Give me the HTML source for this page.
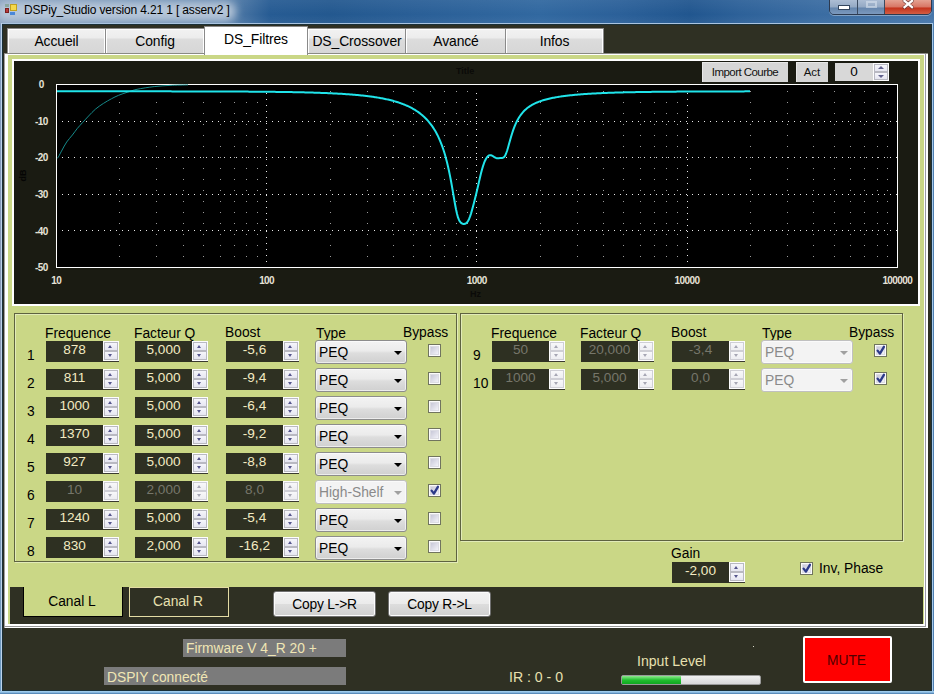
<!DOCTYPE html><html><head><meta charset="utf-8"><style>
*{box-sizing:border-box;margin:0;padding:0}
html,body{width:934px;height:694px;overflow:hidden}
body{position:relative;background:#2f6098;font-family:"Liberation Sans", sans-serif;font-size:13px;color:#000}
.a{position:absolute}
.t{position:absolute;white-space:nowrap;line-height:1}
.tab{position:absolute;top:28px;height:26px;background:linear-gradient(#f2f2f2 0,#ececec 9px,#dcdcdc 10px,#d6d6d6 100%);border:1px solid #8a8a8a;border-bottom:none;box-shadow:inset 1px 1px 0 #fff,inset -1px 0 0 #fff;text-align:center}
.num{position:absolute;width:74px;height:21px}
.num .box{position:absolute;left:0;top:0;width:57px;height:21px;background:#2e3022;color:#f3ebc3;text-align:center;font-size:13.6px;line-height:18px}
.num .spin{position:absolute;left:57px;top:0;width:16px;height:21px;background:#fdfdfd;border-bottom:1px solid #3a3a30}
.spin i{position:absolute;left:1px;width:14px;height:9px;background:linear-gradient(#f6f6fb,#e6e6f1);border:1px solid #b9b9c2}
.spin i:nth-child(1){top:1px}
.spin i:nth-child(2){top:10px}
.spin b{position:absolute;left:5px;width:0;height:0;border-left:2.5px solid transparent;border-right:2.5px solid transparent}
.spin b.u{top:4px;border-bottom:3px solid #56568c}
.spin b.d{top:13px;border-top:3px solid #56568c}
.dis .box{color:#76766a}
.dis .spin b.u{border-bottom-color:#a6a6b4}
.dis .spin b.d{border-top-color:#a6a6b4}
.dis .spin i{background:linear-gradient(#f8f8fa,#eeeef2);border-color:#cfcfd6}
.combo{position:absolute;width:92px;height:24px;border:1px solid #8c8c8c;border-radius:3px;background:linear-gradient(#f3f3f3 0,#ebebeb 45%,#dddddd 55%,#d0d0d0 100%);box-shadow:inset 0 0 0 1px rgba(255,255,255,0.6);font-size:13.8px;line-height:24px;padding-left:3px;color:#000}
.combo b{position:absolute;right:4px;top:10px;width:0;height:0;border-left:4px solid transparent;border-right:4px solid transparent;border-top:4px solid #000}
.combo.dis{background:#f3f3f3;border-color:#c0c0c0;color:#8a8a8a}
.combo.dis b{border-top-color:#a0a0a0}
.chk{position:absolute;width:13px;height:13px;border:1px solid #70745e;background:#fbfbfb}
.chk::after{content:"";position:absolute;left:2px;top:2px;width:7px;height:7px;background:linear-gradient(135deg,#c8c8d8,#f2f2f8);box-shadow:0 0 0 1px #dcdce4}
.chk svg{position:absolute;left:-1px;top:-1px;z-index:2}
.lbl{position:absolute;white-space:nowrap;font-size:13.8px;line-height:13px;color:#000}
.grp{position:absolute;border:1px solid #5e6240;box-shadow:1px 1px 0 #e2ebb8, inset 1px 1px 0 #e2ebb8}
</style></head><body>
<div class="a" style="left:0;top:0;width:934px;height:694px;background:linear-gradient(90deg,#7f9aba 0,#7593b6 30px,#4f79a6 235px,#265b93 270px,#23588f 330px,#2a5f97 420px,#3168a0 540px,#2b6099 620px,#21568f 690px,#2d6199 740px,#3a6ca2 820px,#4676aa 934px)"></div>
<div class="a" style="left:0;top:0;width:934px;height:24px;background:linear-gradient(rgba(255,255,255,0.06),rgba(255,255,255,0.0) 60%,rgba(255,255,255,0.05))"></div>
<div class="a" style="left:-4px;top:1px;width:240px;height:21px;border-radius:10px;background:rgba(186,201,218,0.95);filter:blur(4px)"></div>
<div class="a" style="left:2px;top:23px;width:930px;height:1px;background:#aac4e0"></div>
<div class="a" style="left:5px;top:4px;width:4px;height:3px;background:#8aa7a0"></div>
<div class="a" style="left:5px;top:8px;width:4px;height:5px;background:#b83a3a;border:1px solid #7a2020"></div>
<div class="a" style="left:10px;top:4px;width:7px;height:7px;background:#f4d84a;border:1px solid #c0a020"></div>
<div class="a" style="left:10px;top:12px;width:5px;height:3px;background:#4a88d8"></div>
<div class="t" style="left:24px;top:4px;font-size:12px;letter-spacing:-0.15px;color:#000">DSPiy_Studio version 4.21 1 [ asserv2 ]</div>
<div class="a" style="left:829px;top:-2px;width:103px;height:17px;border:1px solid #2c3a50;border-radius:0 0 5px 5px;overflow:hidden;box-shadow:0 1px 0 rgba(255,255,255,0.35)"><div class="a" style="left:0;top:0;width:27px;height:16px;background:linear-gradient(#b0c0d6,#94a9c4 50%,#6686ad 56%,#7f9cc0)"></div><div class="a" style="left:27px;top:0;width:1px;height:16px;background:#3a4a60"></div><div class="a" style="left:28px;top:0;width:26px;height:16px;background:linear-gradient(#b0c0d6,#94a9c4 50%,#6686ad 56%,#7f9cc0)"></div><div class="a" style="left:54px;top:0;width:1px;height:16px;background:#3a4a60"></div><div class="a" style="left:55px;top:0;width:48px;height:16px;background:linear-gradient(#e6a898,#d87664 50%,#c4331c 56%,#d4644a)"></div></div>
<div class="a" style="left:838px;top:5px;width:12px;height:5px;background:#fff;border:1px solid #34465e"></div>
<div class="a" style="left:866px;top:1px;width:11px;height:7px;border:2px solid rgba(220,230,240,0.55)"></div>
<svg class="a" style="left:901px;top:-1px" width="15" height="11"><path d="M3.5 1.8 L11 8.2 M11 1.8 L3.5 8.2" stroke="#5a3030" stroke-opacity="0.7" stroke-width="3.8" stroke-linecap="round"/><path d="M3.5 1.8 L11 8.2 M11 1.8 L3.5 8.2" stroke="#fff" stroke-width="2.2" stroke-linecap="square"/></svg>
<div class="a" style="left:0;top:24px;width:1px;height:670px;background:linear-gradient(#7f9cc0,#8a98b4 50%,#6a98c0)"></div>
<div class="a" style="left:1px;top:23px;width:1px;height:670px;background:#bcd2ea"></div>
<div class="a" style="left:932px;top:23px;width:1px;height:670px;background:#a6c8ea"></div>
<div class="a" style="left:933px;top:23px;width:1px;height:671px;background:#4f80b2"></div>
<div class="a" style="left:0;top:691px;width:934px;height:1px;background:#9ecbec"></div>
<div class="a" style="left:0;top:692px;width:934px;height:1px;background:#86b6de"></div>
<div class="a" style="left:0;top:693px;width:934px;height:1px;background:#5a8cba"></div>
<div class="a" style="left:2px;top:24px;width:930px;height:667px;background:#2f3023;border:1px solid #1a3038"></div>
<div class="tab" style="left:7px;width:99px"></div>
<div class="t" style="left:7px;width:99px;top:35px;text-align:center;font-size:13.9px;letter-spacing:-0.1px">Accueil</div>
<div class="tab" style="left:105px;width:100px"></div>
<div class="t" style="left:105px;width:100px;top:35px;text-align:center;font-size:13.9px;letter-spacing:-0.1px">Config</div>
<div class="tab" style="left:307px;width:100px"></div>
<div class="t" style="left:307px;width:100px;top:35px;text-align:center;font-size:13.9px;letter-spacing:-0.1px">DS_Crossover</div>
<div class="tab" style="left:405px;width:102px"></div>
<div class="t" style="left:405px;width:102px;top:35px;text-align:center;font-size:13.9px;letter-spacing:-0.1px">Avancé</div>
<div class="tab" style="left:505px;width:99px"></div>
<div class="t" style="left:505px;width:99px;top:35px;text-align:center;font-size:13.9px;letter-spacing:-0.1px">Infos</div>
<div class="a" style="left:4px;top:54px;width:924px;height:574px;background:#fff;border-left:1px solid #a0a0a0"></div>
<div class="a" style="left:925px;top:54px;width:1px;height:573px;background:#9a9aa6"></div>
<div class="a" style="left:4px;top:53px;width:924px;height:1px;background:#8a8a84"></div>
<div class="a" style="left:4px;top:626px;width:922px;height:1px;background:#979797"></div>
<div class="a" style="left:204px;top:26px;width:104px;height:29px;background:#fff;border:1px solid #8a8a8a;border-bottom:none"></div>
<div class="t" style="left:205px;width:102px;top:33px;text-align:center;font-size:13.9px;letter-spacing:-0.1px">DS_Filtres</div>
<div class="a" style="left:8px;top:55px;width:916px;height:569px;background:#cad786"></div>
<div class="a" style="left:12px;top:59px;width:908px;height:247px;background:#1a1b12;border:2px solid #fff"></div>
<svg class="a" style="left:0;top:0" width="934" height="694" shape-rendering="crispEdges"><rect x="56" y="84" width="841" height="183" fill="#000"/><line x1="119.5" y1="91" x2="119.5" y2="267" stroke="#9a9a9a" stroke-width="1" stroke-dasharray="1 10"/><line x1="156.5" y1="91" x2="156.5" y2="267" stroke="#9a9a9a" stroke-width="1" stroke-dasharray="1 10"/><line x1="183.5" y1="91" x2="183.5" y2="267" stroke="#9a9a9a" stroke-width="1" stroke-dasharray="1 10"/><line x1="203.5" y1="91" x2="203.5" y2="267" stroke="#9a9a9a" stroke-width="1" stroke-dasharray="1 10"/><line x1="220.5" y1="91" x2="220.5" y2="267" stroke="#9a9a9a" stroke-width="1" stroke-dasharray="1 10"/><line x1="234.5" y1="91" x2="234.5" y2="267" stroke="#9a9a9a" stroke-width="1" stroke-dasharray="1 10"/><line x1="246.5" y1="91" x2="246.5" y2="267" stroke="#9a9a9a" stroke-width="1" stroke-dasharray="1 10"/><line x1="257.5" y1="91" x2="257.5" y2="267" stroke="#9a9a9a" stroke-width="1" stroke-dasharray="1 10"/><line x1="330.5" y1="91" x2="330.5" y2="267" stroke="#9a9a9a" stroke-width="1" stroke-dasharray="1 10"/><line x1="367.5" y1="91" x2="367.5" y2="267" stroke="#9a9a9a" stroke-width="1" stroke-dasharray="1 10"/><line x1="393.5" y1="91" x2="393.5" y2="267" stroke="#9a9a9a" stroke-width="1" stroke-dasharray="1 10"/><line x1="413.5" y1="91" x2="413.5" y2="267" stroke="#9a9a9a" stroke-width="1" stroke-dasharray="1 10"/><line x1="430.5" y1="91" x2="430.5" y2="267" stroke="#9a9a9a" stroke-width="1" stroke-dasharray="1 10"/><line x1="444.5" y1="91" x2="444.5" y2="267" stroke="#9a9a9a" stroke-width="1" stroke-dasharray="1 10"/><line x1="456.5" y1="91" x2="456.5" y2="267" stroke="#9a9a9a" stroke-width="1" stroke-dasharray="1 10"/><line x1="467.5" y1="91" x2="467.5" y2="267" stroke="#9a9a9a" stroke-width="1" stroke-dasharray="1 10"/><line x1="540.5" y1="91" x2="540.5" y2="267" stroke="#9a9a9a" stroke-width="1" stroke-dasharray="1 10"/><line x1="577.5" y1="91" x2="577.5" y2="267" stroke="#9a9a9a" stroke-width="1" stroke-dasharray="1 10"/><line x1="603.5" y1="91" x2="603.5" y2="267" stroke="#9a9a9a" stroke-width="1" stroke-dasharray="1 10"/><line x1="623.5" y1="91" x2="623.5" y2="267" stroke="#9a9a9a" stroke-width="1" stroke-dasharray="1 10"/><line x1="640.5" y1="91" x2="640.5" y2="267" stroke="#9a9a9a" stroke-width="1" stroke-dasharray="1 10"/><line x1="654.5" y1="91" x2="654.5" y2="267" stroke="#9a9a9a" stroke-width="1" stroke-dasharray="1 10"/><line x1="666.5" y1="91" x2="666.5" y2="267" stroke="#9a9a9a" stroke-width="1" stroke-dasharray="1 10"/><line x1="677.5" y1="91" x2="677.5" y2="267" stroke="#9a9a9a" stroke-width="1" stroke-dasharray="1 10"/><line x1="750.5" y1="91" x2="750.5" y2="267" stroke="#9a9a9a" stroke-width="1" stroke-dasharray="1 10"/><line x1="787.5" y1="91" x2="787.5" y2="267" stroke="#9a9a9a" stroke-width="1" stroke-dasharray="1 10"/><line x1="813.5" y1="91" x2="813.5" y2="267" stroke="#9a9a9a" stroke-width="1" stroke-dasharray="1 10"/><line x1="834.5" y1="91" x2="834.5" y2="267" stroke="#9a9a9a" stroke-width="1" stroke-dasharray="1 10"/><line x1="850.5" y1="91" x2="850.5" y2="267" stroke="#9a9a9a" stroke-width="1" stroke-dasharray="1 10"/><line x1="864.5" y1="91" x2="864.5" y2="267" stroke="#9a9a9a" stroke-width="1" stroke-dasharray="1 10"/><line x1="877.5" y1="91" x2="877.5" y2="267" stroke="#9a9a9a" stroke-width="1" stroke-dasharray="1 10"/><line x1="887.5" y1="91" x2="887.5" y2="267" stroke="#9a9a9a" stroke-width="1" stroke-dasharray="1 10"/><line x1="266.5" y1="93" x2="266.5" y2="267" stroke="#e8e8e8" stroke-width="1" stroke-dasharray="1 5"/><line x1="476.5" y1="93" x2="476.5" y2="267" stroke="#e8e8e8" stroke-width="1" stroke-dasharray="1 5"/><line x1="687.5" y1="93" x2="687.5" y2="267" stroke="#e8e8e8" stroke-width="1" stroke-dasharray="1 5"/><line x1="62" y1="121.5" x2="897" y2="121.5" stroke="#e8e8e8" stroke-width="1" stroke-dasharray="1 5"/><line x1="62" y1="157.5" x2="897" y2="157.5" stroke="#e8e8e8" stroke-width="1" stroke-dasharray="1 5"/><line x1="62" y1="194.5" x2="897" y2="194.5" stroke="#e8e8e8" stroke-width="1" stroke-dasharray="1 5"/><line x1="62" y1="230.5" x2="897" y2="230.5" stroke="#e8e8e8" stroke-width="1" stroke-dasharray="1 5"/><rect x="56.5" y="84.5" width="841" height="183" fill="none" stroke="#fff" stroke-width="1"/><path shape-rendering="auto" fill="none" stroke="#168a8a" stroke-width="1" d="M57.00,158.50 C57.23,158.23 57.55,158.32 58.40,156.90 C59.25,155.48 60.72,152.48 62.10,150.00 C63.48,147.52 64.98,144.50 66.70,142.00 C68.42,139.50 70.67,137.22 72.40,135.00 C74.13,132.78 75.37,130.82 77.10,128.70 C78.83,126.58 80.88,124.42 82.80,122.30 C84.72,120.18 86.48,118.20 88.60,116.00 C90.72,113.80 93.00,111.22 95.50,109.10 C98.00,106.98 100.92,105.03 103.60,103.30 C106.28,101.57 109.10,100.03 111.60,98.70 C114.10,97.37 115.90,96.40 118.60,95.30 C121.30,94.20 124.73,93.10 127.80,92.10 C130.87,91.10 132.60,90.22 137.00,89.30 C141.40,88.38 148.70,87.25 154.20,86.60 C159.70,85.95 164.37,85.68 170.00,85.40 C175.63,85.12 185.00,84.98 188.00,84.90"/><polyline shape-rendering="auto" fill="none" stroke="#20e4ea" stroke-width="2" stroke-linejoin="round" points="57.0,91.32 58.0,91.32 59.0,91.32 60.0,91.32 61.0,91.32 62.0,91.33 63.0,91.33 64.0,91.33 65.0,91.33 66.0,91.33 67.0,91.33 68.0,91.33 69.0,91.33 70.0,91.33 71.0,91.33 72.0,91.33 73.0,91.33 74.0,91.33 75.0,91.33 76.0,91.33 77.0,91.33 78.0,91.33 79.0,91.33 80.0,91.33 81.0,91.33 82.0,91.33 83.0,91.33 84.0,91.33 85.0,91.33 86.0,91.33 87.0,91.33 88.0,91.33 89.0,91.33 90.0,91.33 91.0,91.33 92.0,91.33 93.0,91.33 94.0,91.33 95.0,91.33 96.0,91.33 97.0,91.33 98.0,91.33 99.0,91.33 100.0,91.33 101.0,91.33 102.0,91.33 103.0,91.33 104.0,91.33 105.0,91.33 106.0,91.33 107.0,91.33 108.0,91.33 109.0,91.33 110.0,91.33 111.0,91.33 112.0,91.34 113.0,91.34 114.0,91.34 115.0,91.34 116.0,91.34 117.0,91.34 118.0,91.34 119.0,91.34 120.0,91.34 121.0,91.34 122.0,91.34 123.0,91.34 124.0,91.34 125.0,91.34 126.0,91.34 127.0,91.34 128.0,91.34 129.0,91.34 130.0,91.34 131.0,91.34 132.0,91.34 133.0,91.34 134.0,91.34 135.0,91.34 136.0,91.35 137.0,91.35 138.0,91.35 139.0,91.35 140.0,91.35 141.0,91.35 142.0,91.35 143.0,91.35 144.0,91.35 145.0,91.35 146.0,91.35 147.0,91.35 148.0,91.35 149.0,91.35 150.0,91.35 151.0,91.36 152.0,91.36 153.0,91.36 154.0,91.36 155.0,91.36 156.0,91.36 157.0,91.36 158.0,91.36 159.0,91.36 160.0,91.36 161.0,91.36 162.0,91.37 163.0,91.37 164.0,91.37 165.0,91.37 166.0,91.37 167.0,91.37 168.0,91.37 169.0,91.37 170.0,91.37 171.0,91.37 172.0,91.38 173.0,91.38 174.0,91.38 175.0,91.38 176.0,91.38 177.0,91.38 178.0,91.38 179.0,91.39 180.0,91.39 181.0,91.39 182.0,91.39 183.0,91.39 184.0,91.39 185.0,91.39 186.0,91.40 187.0,91.40 188.0,91.40 189.0,91.40 190.0,91.40 191.0,91.41 192.0,91.41 193.0,91.41 194.0,91.41 195.0,91.41 196.0,91.42 197.0,91.42 198.0,91.42 199.0,91.42 200.0,91.42 201.0,91.43 202.0,91.43 203.0,91.43 204.0,91.43 205.0,91.44 206.0,91.44 207.0,91.44 208.0,91.44 209.0,91.45 210.0,91.45 211.0,91.45 212.0,91.46 213.0,91.46 214.0,91.46 215.0,91.46 216.0,91.47 217.0,91.47 218.0,91.47 219.0,91.48 220.0,91.48 221.0,91.49 222.0,91.49 223.0,91.49 224.0,91.50 225.0,91.50 226.0,91.50 227.0,91.51 228.0,91.51 229.0,91.52 230.0,91.52 231.0,91.53 232.0,91.53 233.0,91.54 234.0,91.54 235.0,91.54 236.0,91.55 237.0,91.56 238.0,91.56 239.0,91.57 240.0,91.57 241.0,91.58 242.0,91.58 243.0,91.59 244.0,91.59 245.0,91.60 246.0,91.61 247.0,91.61 248.0,91.62 249.0,91.63 250.0,91.63 251.0,91.64 252.0,91.65 253.0,91.66 254.0,91.66 255.0,91.67 256.0,91.68 257.0,91.69 258.0,91.69 259.0,91.70 260.0,91.71 261.0,91.72 262.0,91.73 263.0,91.74 264.0,91.75 265.0,91.76 266.0,91.77 267.0,91.78 268.0,91.79 269.0,91.80 270.0,91.81 271.0,91.82 272.0,91.83 273.0,91.84 274.0,91.86 275.0,91.87 276.0,91.88 277.0,91.89 278.0,91.91 279.0,91.92 280.0,91.93 281.0,91.95 282.0,91.96 283.0,91.97 284.0,91.99 285.0,92.00 286.0,92.02 287.0,92.04 288.0,92.05 289.0,92.07 290.0,92.09 291.0,92.10 292.0,92.12 293.0,92.14 294.0,92.16 295.0,92.18 296.0,92.20 297.0,92.22 298.0,92.24 299.0,92.26 300.0,92.28 301.0,92.30 302.0,92.33 303.0,92.35 304.0,92.37 305.0,92.40 306.0,92.42 307.0,92.45 308.0,92.47 309.0,92.50 310.0,92.53 311.0,92.56 312.0,92.58 313.0,92.61 314.0,92.64 315.0,92.67 316.0,92.71 317.0,92.74 318.0,92.77 319.0,92.81 320.0,92.84 321.0,92.88 322.0,92.91 323.0,92.95 324.0,92.99 325.0,93.03 326.0,93.07 327.0,93.11 328.0,93.15 329.0,93.20 330.0,93.24 331.0,93.29 332.0,93.33 333.0,93.38 334.0,93.43 335.0,93.48 336.0,93.53 337.0,93.59 338.0,93.64 339.0,93.70 340.0,93.75 341.0,93.81 342.0,93.87 343.0,93.94 344.0,94.00 345.0,94.07 346.0,94.13 347.0,94.20 348.0,94.27 349.0,94.34 350.0,94.42 351.0,94.50 352.0,94.57 353.0,94.66 354.0,94.74 355.0,94.82 356.0,94.91 357.0,95.00 358.0,95.09 359.0,95.19 360.0,95.29 361.0,95.39 362.0,95.49 363.0,95.60 364.0,95.71 365.0,95.82 366.0,95.94 367.0,96.06 368.0,96.18 369.0,96.30 370.0,96.43 371.0,96.57 372.0,96.71 373.0,96.85 374.0,96.99 375.0,97.15 376.0,97.30 377.0,97.46 378.0,97.63 379.0,97.80 380.0,97.97 381.0,98.15 382.0,98.34 383.0,98.53 384.0,98.73 385.0,98.93 386.0,99.15 387.0,99.36 388.0,99.59 389.0,99.82 390.0,100.06 391.0,100.31 392.0,100.57 393.0,100.84 394.0,101.11 395.0,101.40 396.0,101.69 397.0,102.00 398.0,102.31 399.0,102.64 400.0,102.98 401.0,103.33 402.0,103.70 403.0,104.08 404.0,104.47 405.0,104.88 406.0,105.30 407.0,105.74 408.0,106.19 409.0,106.67 410.0,107.16 411.0,107.68 412.0,108.21 413.0,108.77 414.0,109.35 415.0,109.95 416.0,110.58 417.0,111.24 418.0,111.93 419.0,112.65 420.0,113.40 421.0,114.18 422.0,115.01 423.0,115.87 424.0,116.77 425.0,117.72 426.0,118.72 427.0,119.77 428.0,120.88 429.0,122.04 430.0,123.27 431.0,124.57 432.0,125.94 433.0,127.40 434.0,128.94 435.0,130.58 436.0,132.33 437.0,134.19 438.0,136.17 439.0,138.30 440.0,140.57 441.0,143.02 442.0,145.64 443.0,148.47 444.0,151.53 445.0,154.83 446.0,158.40 447.0,162.26 448.0,166.45 449.0,170.97 450.0,175.84 451.0,181.06 452.0,186.60 453.0,192.37 454.0,198.24 455.0,203.99 456.0,209.30 457.0,213.84 458.0,217.42 459.0,219.98 460.0,221.71 461.0,222.84 462.0,223.54 463.0,223.94 464.0,224.04 465.0,223.84 466.0,223.31 467.0,222.41 468.0,221.06 469.0,219.17 470.0,216.66 471.0,213.60 472.0,210.13 473.0,206.43 474.0,202.63 475.0,198.75 476.0,194.74 477.0,190.56 478.0,186.21 479.0,181.80 480.0,177.46 481.0,173.33 482.0,169.54 483.0,166.15 484.0,163.20 485.0,160.72 486.0,158.71 487.0,157.17 488.0,156.07 489.0,155.41 490.0,155.15 491.0,155.24 492.0,155.63 493.0,156.22 494.0,156.88 495.0,157.49 496.0,157.93 497.0,158.16 498.0,158.20 499.0,158.14 500.0,158.05 501.0,158.00 502.0,157.93 503.0,157.71 504.0,157.09 505.0,155.83 506.0,153.78 507.0,150.99 508.0,147.68 509.0,144.09 510.0,140.48 511.0,136.98 512.0,133.70 513.0,130.67 514.0,127.91 515.0,125.39 516.0,123.11 517.0,121.05 518.0,119.19 519.0,117.50 520.0,115.96 521.0,114.56 522.0,113.29 523.0,112.12 524.0,111.05 525.0,110.07 526.0,109.16 527.0,108.32 528.0,107.54 529.0,106.82 530.0,106.15 531.0,105.52 532.0,104.93 533.0,104.38 534.0,103.86 535.0,103.38 536.0,102.92 537.0,102.49 538.0,102.08 539.0,101.69 540.0,101.32 541.0,100.97 542.0,100.64 543.0,100.33 544.0,100.03 545.0,99.74 546.0,99.46 547.0,99.20 548.0,98.95 549.0,98.71 550.0,98.48 551.0,98.26 552.0,98.05 553.0,97.85 554.0,97.65 555.0,97.47 556.0,97.29 557.0,97.11 558.0,96.95 559.0,96.78 560.0,96.63 561.0,96.48 562.0,96.34 563.0,96.20 564.0,96.06 565.0,95.93 566.0,95.80 567.0,95.68 568.0,95.56 569.0,95.45 570.0,95.34 571.0,95.23 572.0,95.13 573.0,95.03 574.0,94.93 575.0,94.84 576.0,94.75 577.0,94.66 578.0,94.57 579.0,94.49 580.0,94.41 581.0,94.33 582.0,94.25 583.0,94.18 584.0,94.11 585.0,94.04 586.0,93.97 587.0,93.90 588.0,93.84 589.0,93.78 590.0,93.72 591.0,93.66 592.0,93.60 593.0,93.54 594.0,93.49 595.0,93.44 596.0,93.38 597.0,93.33 598.0,93.29 599.0,93.24 600.0,93.19 601.0,93.15 602.0,93.10 603.0,93.06 604.0,93.02 605.0,92.98 606.0,92.94 607.0,92.90 608.0,92.86 609.0,92.83 610.0,92.79 611.0,92.75 612.0,92.72 613.0,92.69 614.0,92.66 615.0,92.62 616.0,92.59 617.0,92.56 618.0,92.53 619.0,92.51 620.0,92.48 621.0,92.45 622.0,92.42 623.0,92.40 624.0,92.37 625.0,92.35 626.0,92.33 627.0,92.30 628.0,92.28 629.0,92.26 630.0,92.24 631.0,92.21 632.0,92.19 633.0,92.17 634.0,92.15 635.0,92.13 636.0,92.12 637.0,92.10 638.0,92.08 639.0,92.06 640.0,92.04 641.0,92.03 642.0,92.01 643.0,92.00 644.0,91.98 645.0,91.96 646.0,91.95 647.0,91.94 648.0,91.92 649.0,91.91 650.0,91.89 651.0,91.88 652.0,91.87 653.0,91.85 654.0,91.84 655.0,91.83 656.0,91.82 657.0,91.81 658.0,91.80 659.0,91.78 660.0,91.77 661.0,91.76 662.0,91.75 663.0,91.74 664.0,91.73 665.0,91.72 666.0,91.71 667.0,91.71 668.0,91.70 669.0,91.69 670.0,91.68 671.0,91.67 672.0,91.66 673.0,91.65 674.0,91.65 675.0,91.64 676.0,91.63 677.0,91.62 678.0,91.62 679.0,91.61 680.0,91.60 681.0,91.60 682.0,91.59 683.0,91.58 684.0,91.58 685.0,91.57 686.0,91.57 687.0,91.56 688.0,91.55 689.0,91.55 690.0,91.54 691.0,91.54 692.0,91.53 693.0,91.53 694.0,91.52 695.0,91.52 696.0,91.51 697.0,91.51 698.0,91.50 699.0,91.50 700.0,91.50 701.0,91.49 702.0,91.49 703.0,91.48 704.0,91.48 705.0,91.48 706.0,91.47 707.0,91.47 708.0,91.46 709.0,91.46 710.0,91.46 711.0,91.45 712.0,91.45 713.0,91.45 714.0,91.44 715.0,91.44 716.0,91.44 717.0,91.44 718.0,91.43 719.0,91.43 720.0,91.43 721.0,91.42 722.0,91.42 723.0,91.42 724.0,91.42 725.0,91.41 726.0,91.41 727.0,91.41 728.0,91.41 729.0,91.40 730.0,91.40 731.0,91.40 732.0,91.40 733.0,91.40 734.0,91.39 735.0,91.39 736.0,91.39 737.0,91.39 738.0,91.39 739.0,91.38 740.0,91.38 741.0,91.38 742.0,91.38 743.0,91.38 744.0,91.38 745.0,91.37 746.0,91.37 747.0,91.37 748.0,91.37 749.0,91.37 750.0,91.37"/></svg>
<div class="t" style="left:11.3px;width:60px;text-align:center;top:80.2px;font-size:10px;font-weight:bold;letter-spacing:-0.6px;color:#e6e2d8">0</div>
<div class="t" style="left:11.3px;width:60px;text-align:center;top:116.8px;font-size:10px;font-weight:bold;letter-spacing:-0.6px;color:#e6e2d8">-10</div>
<div class="t" style="left:11.3px;width:60px;text-align:center;top:153.4px;font-size:10px;font-weight:bold;letter-spacing:-0.6px;color:#e6e2d8">-20</div>
<div class="t" style="left:11.3px;width:60px;text-align:center;top:190.0px;font-size:10px;font-weight:bold;letter-spacing:-0.6px;color:#e6e2d8">-30</div>
<div class="t" style="left:11.3px;width:60px;text-align:center;top:226.6px;font-size:10px;font-weight:bold;letter-spacing:-0.6px;color:#e6e2d8">-40</div>
<div class="t" style="left:11.3px;width:60px;text-align:center;top:263.2px;font-size:10px;font-weight:bold;letter-spacing:-0.6px;color:#e6e2d8">-50</div>
<div class="t" style="left:26.3px;width:60px;text-align:center;top:276px;font-size:10px;font-weight:bold;letter-spacing:-0.6px;color:#e6e2d8">10</div>
<div class="t" style="left:236.6px;width:60px;text-align:center;top:276px;font-size:10px;font-weight:bold;letter-spacing:-0.6px;color:#e6e2d8">100</div>
<div class="t" style="left:446.8px;width:60px;text-align:center;top:276px;font-size:10px;font-weight:bold;letter-spacing:-0.6px;color:#e6e2d8">1000</div>
<div class="t" style="left:657.0px;width:60px;text-align:center;top:276px;font-size:10px;font-weight:bold;letter-spacing:-0.6px;color:#e6e2d8">10000</div>
<div class="t" style="left:867.3px;width:60px;text-align:center;top:276px;font-size:10px;font-weight:bold;letter-spacing:-0.6px;color:#e6e2d8">100000</div>
<div class="t" style="left:456px;top:67px;font-size:9px;font-weight:bold;color:#0a0a08">Title</div>
<div class="t" style="left:470px;top:290px;font-size:9px;font-weight:bold;color:#0a0a08">Hz</div>
<div class="t" style="left:17px;top:171px;font-size:9px;font-weight:bold;color:#050504;transform:rotate(-90deg)">dB</div>
<div class="a" style="left:702px;top:62px;width:86px;height:20px;background:#d6d6d6;border-top:1px solid #e8e8e8;border-left:1px solid #e8e8e8;"></div>
<div class="t" style="left:702px;width:86px;text-align:center;top:67px;font-size:11.5px;letter-spacing:-0.55px;color:#111">Import Courbe</div>
<div class="a" style="left:796px;top:62px;width:32px;height:20px;background:#d6d6d6;border-top:1px solid #e8e8e8;border-left:1px solid #e8e8e8;"></div>
<div class="t" style="left:796px;width:32px;text-align:center;top:67px;font-size:11.5px;color:#111">Act</div>
<div class="a" style="left:835px;top:63px;width:54px;height:18px;background:#d8d8d8"></div>
<div class="t" style="left:835px;width:38px;text-align:center;top:65px;font-size:13.5px;color:#000">0</div>
<div class="a" style="left:873px;top:63px;width:16px;height:18px;background:#fdfdfd"></div>
<div class="a" style="left:874px;top:64px;width:14px;height:8px;background:linear-gradient(#f6f6fb,#e6e6f1);border:1px solid #b9b9c2"></div>
<div class="a" style="left:874px;top:72px;width:14px;height:8px;background:linear-gradient(#f6f6fb,#e6e6f1);border:1px solid #b9b9c2"></div>
<div class="a" style="left:878px;top:66px;width:0;height:0;border-left:3px solid transparent;border-right:3px solid transparent;border-bottom:3px solid #62628e"></div>
<div class="a" style="left:878px;top:75px;width:0;height:0;border-left:3px solid transparent;border-right:3px solid transparent;border-top:3px solid #62628e"></div>
<div class="grp" style="left:14px;top:313px;width:443px;height:249px"></div>
<div class="grp" style="left:460px;top:313px;width:443px;height:228px"></div>
<div class="lbl" style="left:45px;top:327px">Frequence</div>
<div class="lbl" style="left:134px;top:327px">Facteur Q</div>
<div class="lbl" style="left:225px;top:326px">Boost</div>
<div class="lbl" style="left:316px;top:327px">Type</div>
<div class="lbl" style="left:403px;top:326px">Bypass</div>
<div class="lbl" style="left:491px;top:327px">Frequence</div>
<div class="lbl" style="left:580px;top:327px">Facteur Q</div>
<div class="lbl" style="left:671px;top:326px">Boost</div>
<div class="lbl" style="left:762px;top:327px">Type</div>
<div class="lbl" style="left:849px;top:326px">Bypass</div>
<div class="lbl" style="left:27px;top:349px">1</div>
<div class="num" style="left:46px;top:341px"><div class="box">878</div><div class="spin"><i></i><i></i><b class="u"></b><b class="d"></b></div></div>
<div class="num" style="left:135px;top:341px"><div class="box">5,000</div><div class="spin"><i></i><i></i><b class="u"></b><b class="d"></b></div></div>
<div class="num" style="left:226px;top:341px"><div class="box">-5,6</div><div class="spin"><i></i><i></i><b class="u"></b><b class="d"></b></div></div>
<div class="combo" style="left:315px;top:340px">PEQ<b></b></div>
<div class="chk" style="left:428px;top:344px"></div>
<div class="lbl" style="left:27px;top:377px">2</div>
<div class="num" style="left:46px;top:369px"><div class="box">811</div><div class="spin"><i></i><i></i><b class="u"></b><b class="d"></b></div></div>
<div class="num" style="left:135px;top:369px"><div class="box">5,000</div><div class="spin"><i></i><i></i><b class="u"></b><b class="d"></b></div></div>
<div class="num" style="left:226px;top:369px"><div class="box">-9,4</div><div class="spin"><i></i><i></i><b class="u"></b><b class="d"></b></div></div>
<div class="combo" style="left:315px;top:368px">PEQ<b></b></div>
<div class="chk" style="left:428px;top:372px"></div>
<div class="lbl" style="left:27px;top:405px">3</div>
<div class="num" style="left:46px;top:397px"><div class="box">1000</div><div class="spin"><i></i><i></i><b class="u"></b><b class="d"></b></div></div>
<div class="num" style="left:135px;top:397px"><div class="box">5,000</div><div class="spin"><i></i><i></i><b class="u"></b><b class="d"></b></div></div>
<div class="num" style="left:226px;top:397px"><div class="box">-6,4</div><div class="spin"><i></i><i></i><b class="u"></b><b class="d"></b></div></div>
<div class="combo" style="left:315px;top:396px">PEQ<b></b></div>
<div class="chk" style="left:428px;top:400px"></div>
<div class="lbl" style="left:27px;top:433px">4</div>
<div class="num" style="left:46px;top:425px"><div class="box">1370</div><div class="spin"><i></i><i></i><b class="u"></b><b class="d"></b></div></div>
<div class="num" style="left:135px;top:425px"><div class="box">5,000</div><div class="spin"><i></i><i></i><b class="u"></b><b class="d"></b></div></div>
<div class="num" style="left:226px;top:425px"><div class="box">-9,2</div><div class="spin"><i></i><i></i><b class="u"></b><b class="d"></b></div></div>
<div class="combo" style="left:315px;top:424px">PEQ<b></b></div>
<div class="chk" style="left:428px;top:428px"></div>
<div class="lbl" style="left:27px;top:461px">5</div>
<div class="num" style="left:46px;top:453px"><div class="box">927</div><div class="spin"><i></i><i></i><b class="u"></b><b class="d"></b></div></div>
<div class="num" style="left:135px;top:453px"><div class="box">5,000</div><div class="spin"><i></i><i></i><b class="u"></b><b class="d"></b></div></div>
<div class="num" style="left:226px;top:453px"><div class="box">-8,8</div><div class="spin"><i></i><i></i><b class="u"></b><b class="d"></b></div></div>
<div class="combo" style="left:315px;top:452px">PEQ<b></b></div>
<div class="chk" style="left:428px;top:456px"></div>
<div class="lbl" style="left:27px;top:489px">6</div>
<div class="num dis" style="left:46px;top:481px"><div class="box">10</div><div class="spin"><i></i><i></i><b class="u"></b><b class="d"></b></div></div>
<div class="num dis" style="left:135px;top:481px"><div class="box">2,000</div><div class="spin"><i></i><i></i><b class="u"></b><b class="d"></b></div></div>
<div class="num dis" style="left:226px;top:481px"><div class="box">8,0</div><div class="spin"><i></i><i></i><b class="u"></b><b class="d"></b></div></div>
<div class="combo dis" style="left:315px;top:480px">High-Shelf<b></b></div>
<div class="chk" style="left:428px;top:484px"><svg width="13" height="13"><path d="M3.6 6.6 L5.9 9.6 L9.9 2.8" fill="none" stroke="#2c3a88" stroke-width="2.3" stroke-linecap="round" stroke-linejoin="round"/></svg></div>
<div class="lbl" style="left:27px;top:517px">7</div>
<div class="num" style="left:46px;top:509px"><div class="box">1240</div><div class="spin"><i></i><i></i><b class="u"></b><b class="d"></b></div></div>
<div class="num" style="left:135px;top:509px"><div class="box">5,000</div><div class="spin"><i></i><i></i><b class="u"></b><b class="d"></b></div></div>
<div class="num" style="left:226px;top:509px"><div class="box">-5,4</div><div class="spin"><i></i><i></i><b class="u"></b><b class="d"></b></div></div>
<div class="combo" style="left:315px;top:508px">PEQ<b></b></div>
<div class="chk" style="left:428px;top:512px"></div>
<div class="lbl" style="left:27px;top:545px">8</div>
<div class="num" style="left:46px;top:537px"><div class="box">830</div><div class="spin"><i></i><i></i><b class="u"></b><b class="d"></b></div></div>
<div class="num" style="left:135px;top:537px"><div class="box">2,000</div><div class="spin"><i></i><i></i><b class="u"></b><b class="d"></b></div></div>
<div class="num" style="left:226px;top:537px"><div class="box">-16,2</div><div class="spin"><i></i><i></i><b class="u"></b><b class="d"></b></div></div>
<div class="combo" style="left:315px;top:536px">PEQ<b></b></div>
<div class="chk" style="left:428px;top:540px"></div>
<div class="lbl" style="left:473px;top:349px">9</div>
<div class="num dis" style="left:492px;top:341px"><div class="box">50</div><div class="spin"><i></i><i></i><b class="u"></b><b class="d"></b></div></div>
<div class="num dis" style="left:581px;top:341px"><div class="box">20,000</div><div class="spin"><i></i><i></i><b class="u"></b><b class="d"></b></div></div>
<div class="num dis" style="left:672px;top:341px"><div class="box">-3,4</div><div class="spin"><i></i><i></i><b class="u"></b><b class="d"></b></div></div>
<div class="combo dis" style="left:761px;top:340px">PEQ<b></b></div>
<div class="chk" style="left:874px;top:344px"><svg width="13" height="13"><path d="M3.6 6.6 L5.9 9.6 L9.9 2.8" fill="none" stroke="#2c3a88" stroke-width="2.3" stroke-linecap="round" stroke-linejoin="round"/></svg></div>
<div class="lbl" style="left:473px;top:377px">10</div>
<div class="num dis" style="left:492px;top:369px"><div class="box">1000</div><div class="spin"><i></i><i></i><b class="u"></b><b class="d"></b></div></div>
<div class="num dis" style="left:581px;top:369px"><div class="box">5,000</div><div class="spin"><i></i><i></i><b class="u"></b><b class="d"></b></div></div>
<div class="num dis" style="left:672px;top:369px"><div class="box">0,0</div><div class="spin"><i></i><i></i><b class="u"></b><b class="d"></b></div></div>
<div class="combo dis" style="left:761px;top:368px">PEQ<b></b></div>
<div class="chk" style="left:874px;top:372px"><svg width="13" height="13"><path d="M3.6 6.6 L5.9 9.6 L9.9 2.8" fill="none" stroke="#2c3a88" stroke-width="2.3" stroke-linecap="round" stroke-linejoin="round"/></svg></div>
<div class="lbl" style="left:671px;top:547px">Gain</div>
<div class="num" style="left:672px;top:562px"><div class="box">-2,00</div><div class="spin"><i></i><i></i><b class="u"></b><b class="d"></b></div></div>
<div class="chk" style="left:800px;top:562px"><svg width="13" height="13"><path d="M3.6 6.6 L5.9 9.6 L9.9 2.8" fill="none" stroke="#2c3a88" stroke-width="2.3" stroke-linecap="round" stroke-linejoin="round"/></svg></div>
<div class="lbl" style="left:819px;top:562px">Inv, Phase</div>
<div class="a" style="left:10px;top:587px;width:913px;height:37px;background:#2f3023"></div>
<div class="a" style="left:23px;top:587px;width:100px;height:30px;background:#cad786;border:1px solid #000;border-top:none"></div>
<div class="t" style="left:22px;width:100px;text-align:center;top:595px;font-size:13.8px">Canal L</div>
<div class="a" style="left:129px;top:587px;width:100px;height:30px;border:1px solid #e4dca4"></div>
<div class="t" style="left:128px;width:100px;text-align:center;top:595px;font-size:13.8px;color:#e8e0b0">Canal R</div>
<div class="a" style="left:273px;top:591px;width:103px;height:26px;border:1px solid #707070;border-radius:3px;background:linear-gradient(#f2f2f2 0,#ebebeb 50%,#dddddd 51%,#cfcfcf 100%);box-shadow:inset 0 0 0 1px #fcfcfc"></div>
<div class="t" style="left:273px;width:103px;text-align:center;top:598px;font-size:13.8px;letter-spacing:-0.2px">Copy L-&gt;R</div>
<div class="a" style="left:388px;top:591px;width:103px;height:26px;border:1px solid #707070;border-radius:3px;background:linear-gradient(#f2f2f2 0,#ebebeb 50%,#dddddd 51%,#cfcfcf 100%);box-shadow:inset 0 0 0 1px #fcfcfc"></div>
<div class="t" style="left:388px;width:103px;text-align:center;top:598px;font-size:13.8px;letter-spacing:-0.2px">Copy R-&gt;L</div>
<div class="a" style="left:183px;top:639px;width:163px;height:18px;background:#7b7b7b"></div>
<div class="t" style="left:186px;top:642px;font-size:13.8px;color:#f0e6b4">Firmware V 4_R 20 +</div>
<div class="a" style="left:104px;top:667px;width:242px;height:18px;background:#7b7b7b"></div>
<div class="t" style="left:107px;top:671px;font-size:13.8px;color:#f0e6b4">DSPIY connecté</div>
<div class="t" style="left:509px;top:670px;font-size:14.1px;color:#e8e0b0">IR : 0 - 0</div>
<div class="t" style="left:637px;top:654px;font-size:14.1px;color:#e8e0b0">Input Level</div>
<div class="a" style="left:621px;top:675px;width:140px;height:10px;border:1px solid #9a9a9a;border-radius:2px;background:linear-gradient(#f0f0f0,#d8d8d8)"></div>
<div class="a" style="left:622px;top:676px;width:59px;height:8px;background:linear-gradient(#8ee88e,#22c030 50%,#10a820 100%)"></div>
<div class="a" style="left:803px;top:636px;width:89px;height:47px;border:2px solid #fff;border-radius:2px;background:#ff0000"></div>
<div class="t" style="left:802px;width:89px;text-align:center;top:654px;font-size:13.8px;color:#500000">MUTE</div>
<div class="a" style="left:753px;top:646px;width:1px;height:1px;background:#d8d8c8"></div>
</body></html>
